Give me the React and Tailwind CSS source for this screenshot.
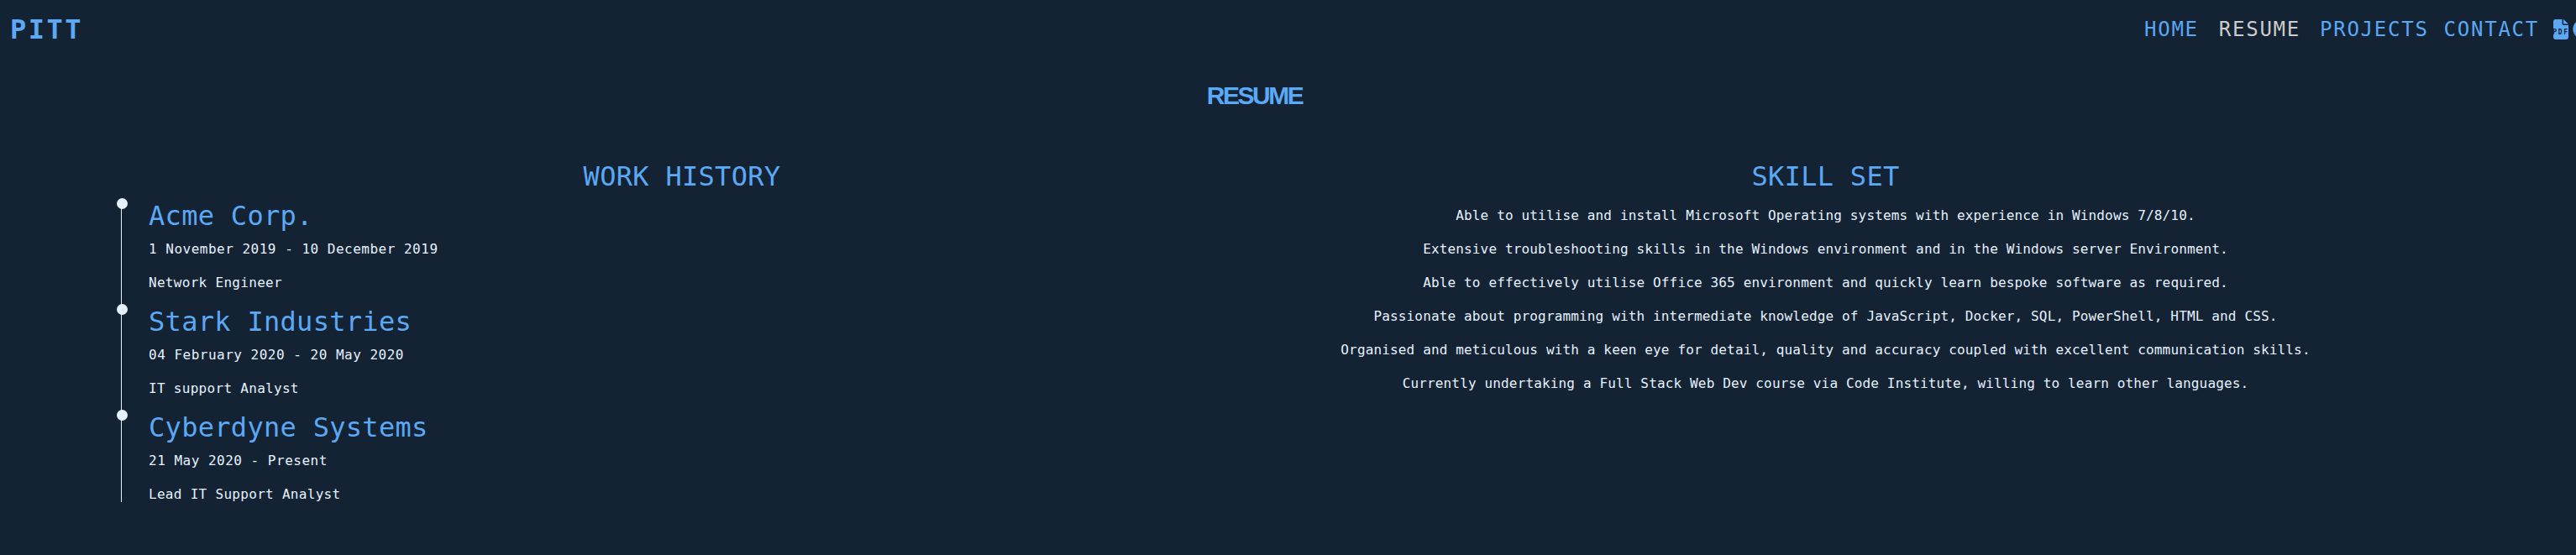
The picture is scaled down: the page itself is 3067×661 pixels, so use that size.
import { FaGithub } from 'react-icons/fa6'

const MONO = "font-['DejaVu_Sans_Mono',monospace]"

const jobs = [
  { company: 'Acme Corp.', dates: '1 November 2019 - 10 December 2019', role: 'Network Engineer' },
  { company: 'Stark Industries', dates: '04 February 2020 - 20 May 2020', role: 'IT support Analyst' },
  { company: 'Cyberdyne Systems', dates: '21 May 2020 - Present', role: 'Lead IT Support Analyst' },
]

const skills = [
  'Able to utilise and install Microsoft Operating systems with experience in Windows 7/8/10.',
  'Extensive troubleshooting skills in the Windows environment and in the Windows server Environment.',
  'Able to effectively utilise Office 365 environment and quickly learn bespoke software as required.',
  'Passionate about programming with intermediate knowledge of JavaScript, Docker, SQL, PowerShell, HTML and CSS.',
  'Organised and meticulous with a keen eye for detail, quality and accuracy coupled with excellent communication skills.',
  'Currently undertaking a Full Stack Web Dev course via Code Institute, willing to learn other languages.',
]

function PdfIcon() {
  return (
    <svg viewBox="0 0 18 24" className="w-[18px] h-6 shrink-0 mr-[5px]">
      <path d="M3 0H10.5V5a2 2 0 0 0 2 2H18V21a3 3 0 0 1-3 3H3a3 3 0 0 1-3-3V3a3 3 0 0 1 3-3Z" fill="#5ba8f5" />
      <path d="M12 0L18 5.5H13a1 1 0 0 1-1-1Z" fill="#5ba8f5" />
      <text x="9" y="18" textAnchor="middle" fontSize="8" fontWeight="700" fill="#132333" fontFamily="DejaVu Sans Mono">PDF</text>
    </svg>
  )
}

function Header() {
  return (
    <header className="flex items-center h-[70px] pl-3">
      <div className={`flex-1 text-[32px] font-bold tracking-[2.5px] text-[#5ba8f5] ${MONO}`}>PITT</div>
      <nav className={`flex items-center w-[514px] shrink-0 whitespace-nowrap text-[24px] tracking-[1.75px] text-[#5ba8f5] ${MONO}`}>
        <a className="mr-[24px]">HOME</a>
        <a className="mr-[23px] text-[#cccccc]">RESUME</a>
        <a className="mr-[18px]">PROJECTS</a>
        <a className="mr-[17px]">CONTACT</a>
        <PdfIcon />
        <FaGithub className="w-6 h-6 shrink-0" />
      </nav>
    </header>
  )
}

function WorkHistory() {
  return (
    <section className="w-[1464px] shrink-0">
      <h2 className={`mb-2 text-center text-[32px] leading-[38px] tracking-[0.3px] text-[#5ba8f5] ${MONO}`}>WORK HISTORY</h2>
      <ul className="ml-[64px] w-fit border-l border-[#e6f1ff] text-[#e6f1ff]">
        {jobs.map((job) => (
          <li key={job.company} className="relative pl-8 h-[126px] last:h-[109px]">
            <span className="absolute left-[-6px] top-[-1px] w-[13px] h-[13px] rounded-full bg-[#e6f1ff]" />
            <h3 className={`text-[32px] leading-[40px] tracking-[0.3px] text-[#5ba8f5] ${MONO}`}>{job.company}</h3>
            <p className={`text-[16px] leading-[40px] tracking-[0.5px] ${MONO}`}>{job.dates}</p>
            <p className={`text-[16px] leading-[40px] tracking-[0.3px] ${MONO}`}>{job.role}</p>
          </li>
        ))}
      </ul>
    </section>
  )
}

function SkillSet() {
  return (
    <section className="w-[1259px] shrink-0 text-center">
      <h2 className={`mb-2 text-[32px] leading-[38px] tracking-[0.3px] text-[#5ba8f5] ${MONO}`}>SKILL SET</h2>
      <ul className="text-[#e6f1ff]">
        {skills.map((skill) => (
          <li key={skill} className={`text-[16px] leading-[40px] tracking-[0.15px] ${MONO}`}>{skill}</li>
        ))}
      </ul>
    </section>
  )
}

export default function App() {
  return (
    <div className="h-[661px] overflow-hidden bg-[#132333]">
      <Header />
      <h1 className="pt-[22px] pr-[80px] text-center text-[30px] leading-[44px] tracking-[-2.5px] font-bold text-[#5ba8f5] font-['Liberation_Sans',sans-serif]">RESUME</h1>
      <main className="flex pl-[80px] pt-[55px]">
        <WorkHistory />
        <SkillSet />
      </main>
    </div>
  )
}
